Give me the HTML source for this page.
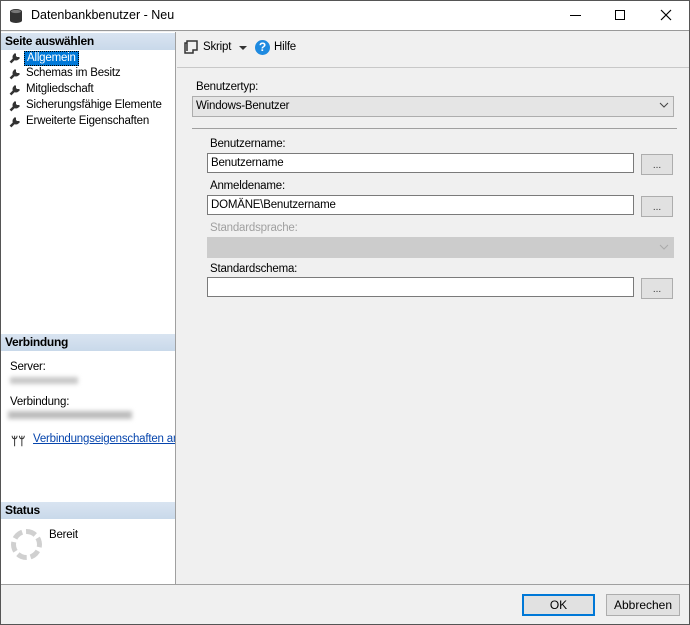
<!DOCTYPE html>
<html><head><meta charset="utf-8"><style>
*{box-sizing:border-box;margin:0;padding:0}
body{width:690px;height:625px;overflow:hidden;font-family:"Liberation Sans",sans-serif;font-size:12px;color:#000;background:#f0f0f0;position:relative}
.a{position:absolute;white-space:nowrap}
.hdr{position:absolute;left:1px;width:174px;height:17px;background:linear-gradient(#d9e4f1,#c9d9ea);font-weight:bold;font-size:12px;padding:1px 0 0 4px;letter-spacing:-0.3px}
.inp{position:absolute;background:#fff;border:1px solid #7a7a7a;height:20px;padding:3px 3px;font-size:11.5px;letter-spacing:-0.2px;white-space:nowrap}
.btn{position:absolute;background:#e1e1e1;border:1px solid #adadad;width:32px;height:21px;font-size:10px;text-align:center;line-height:21px;color:#333}
.lbl{position:absolute;font-size:11.5px;white-space:nowrap;letter-spacing:-0.2px}
.wr{position:absolute;left:9px;width:12px;height:12px}
</style></head><body>
<div class="a" style="left:0;top:0;width:690px;height:625px;border:1px solid #555"></div>
<div class="a" style="left:1px;top:1px;width:688px;height:30px;background:#fff;border-bottom:1px solid #999"></div>
<svg class="a" style="left:9px;top:8px" width="14" height="16" viewBox="0 0 14 16"><ellipse cx="7" cy="3.5" rx="6" ry="2.5" fill="#333"/><rect x="1" y="3.5" width="12" height="9" fill="#333"/><ellipse cx="7" cy="12.5" rx="6" ry="2.5" fill="#333"/><ellipse cx="7" cy="3.5" rx="5" ry="1.6" fill="#777"/></svg>
<div class="a" style="left:31px;top:8px;font-size:12.5px">Datenbankbenutzer - Neu</div>
<div class="a" style="left:570px;top:15px;width:11px;height:1px;background:#000"></div>
<div class="a" style="left:615px;top:10px;width:10px;height:10px;border:1px solid #000"></div>
<svg class="a" style="left:660px;top:9px" width="12" height="12"><path d="M1 1L11 11M11 1L1 11" stroke="#000" stroke-width="1.2"/></svg>

<div class="a" style="left:1px;top:32px;width:175px;height:552px;background:#fff;border-right:1px solid #a0a0a0"></div>
<div class="hdr" style="top:33px">Seite auswählen</div>
<svg class="wr" style="top:52px" viewBox="0 0 12 12"><path d="M1.5 10.5L6 6" stroke="#333" stroke-width="2.5"/><path d="M4.5 2.5a3.5 3.5 0 0 0 5 5l1.5-1.5-1-1-2 0-1-1 0-2-1-1z" fill="#333"/></svg>
<div class="a" style="left:24px;top:51px;height:15px;background:#0078d7;color:#fff;padding:0 2px;border:1px dotted #000;font-size:11.5px;line-height:13px;letter-spacing:-0.2px">Allgemein</div>
<svg class="wr" style="top:68px" viewBox="0 0 12 12"><path d="M1.5 10.5L6 6" stroke="#333" stroke-width="2.5"/><path d="M4.5 2.5a3.5 3.5 0 0 0 5 5l1.5-1.5-1-1-2 0-1-1 0-2-1-1z" fill="#333"/></svg>
<div class="lbl" style="left:26px;top:67px">Schemas im Besitz</div>
<svg class="wr" style="top:84px" viewBox="0 0 12 12"><path d="M1.5 10.5L6 6" stroke="#333" stroke-width="2.5"/><path d="M4.5 2.5a3.5 3.5 0 0 0 5 5l1.5-1.5-1-1-2 0-1-1 0-2-1-1z" fill="#333"/></svg>
<div class="lbl" style="left:26px;top:83px">Mitgliedschaft</div>
<svg class="wr" style="top:100px" viewBox="0 0 12 12"><path d="M1.5 10.5L6 6" stroke="#333" stroke-width="2.5"/><path d="M4.5 2.5a3.5 3.5 0 0 0 5 5l1.5-1.5-1-1-2 0-1-1 0-2-1-1z" fill="#333"/></svg>
<div class="lbl" style="left:26px;top:99px">Sicherungsfähige Elemente</div>
<svg class="wr" style="top:116px" viewBox="0 0 12 12"><path d="M1.5 10.5L6 6" stroke="#333" stroke-width="2.5"/><path d="M4.5 2.5a3.5 3.5 0 0 0 5 5l1.5-1.5-1-1-2 0-1-1 0-2-1-1z" fill="#333"/></svg>
<div class="lbl" style="left:26px;top:115px">Erweiterte Eigenschaften</div>

<div class="hdr" style="top:334px">Verbindung</div>
<div class="lbl" style="left:10px;top:361px">Server:</div>
<div class="a" style="left:10px;top:377px;width:68px;height:7px;background:#c8c8c8;filter:blur(2px)"></div>
<div class="lbl" style="left:10px;top:396px">Verbindung:</div>
<div class="a" style="left:8px;top:411px;width:124px;height:8px;background:#bdbdbd;filter:blur(2px)"></div>
<div class="a" style="left:11px;top:434px;font-size:12px;font-weight:bold;color:#333">ᛘᛘ</div>
<div class="lbl" style="left:33px;top:433px;color:#0645ad;text-decoration:underline;width:142px;overflow:hidden">Verbindungseigenschaften anzeigen</div>

<div class="hdr" style="top:502px">Status</div>
<div class="a" style="left:11px;top:529px;width:31px;height:31px;border-radius:50%;border:5px dashed #d0d0d0"></div>
<div class="lbl" style="left:49px;top:529px">Bereit</div>

<svg class="a" style="left:184px;top:40px" width="14" height="14"><path d="M3 1h10v9H9v3H1V3h2zM3 3v8" stroke="#333" stroke-width="1.5" fill="none"/></svg>
<div class="lbl" style="left:203px;top:41px">Skript</div>
<div class="a" style="left:239px;top:46px;border:4px solid transparent;border-top:4px solid #333"></div>
<div class="a" style="left:255px;top:40px;width:15px;height:15px;border-radius:50%;background:#1e8ae0;color:#fff;font-weight:bold;font-size:12px;text-align:center;line-height:15px">?</div>
<div class="lbl" style="left:274px;top:41px">Hilfe</div>
<div class="a" style="left:177px;top:67px;width:512px;height:1px;background:#c8c8c8"></div>

<div class="lbl" style="left:196px;top:81px">Benutzertyp:</div>
<div class="a" style="left:192px;top:96px;width:482px;height:21px;background:#e5e5e5;border:1px solid #adadad;padding:3px 3px;font-size:11.5px;letter-spacing:-0.2px">Windows-Benutzer</div>
<svg class="a" style="left:659px;top:102px" width="10" height="7"><path d="M1 1l4 4 4-4" stroke="#444" fill="none"/></svg>
<div class="a" style="left:192px;top:128px;width:485px;height:1px;background:#a0a0a0"></div>

<div class="lbl" style="left:210px;top:138px">Benutzername:</div>
<div class="inp" style="left:207px;top:153px;width:427px">Benutzername</div>
<div class="btn" style="left:641px;top:154px">...</div>
<div class="lbl" style="left:210px;top:180px">Anmeldename:</div>
<div class="inp" style="left:207px;top:195px;width:427px">DOMÄNE\Benutzername</div>
<div class="btn" style="left:641px;top:196px">...</div>
<div class="lbl" style="left:210px;top:222px;color:#a0a0a0">Standardsprache:</div>
<div class="a" style="left:207px;top:237px;width:467px;height:21px;background:#ccc;border:1px solid #ccc"></div>
<svg class="a" style="left:659px;top:244px" width="10" height="7"><path d="M1 1l4 4 4-4" stroke="#aaa" fill="none"/></svg>
<div class="lbl" style="left:210px;top:263px">Standardschema:</div>
<div class="inp" style="left:207px;top:277px;width:427px"></div>
<div class="btn" style="left:641px;top:278px">...</div>

<div class="a" style="left:1px;top:584px;width:688px;height:1px;background:#a0a0a0"></div>
<div class="a" style="left:522px;top:594px;width:73px;height:22px;background:#e1e1e1;border:2px solid #0078d7;text-align:center;line-height:18px">OK</div>
<div class="a" style="left:606px;top:594px;width:74px;height:22px;background:#e1e1e1;border:1px solid #adadad;text-align:center;line-height:20px">Abbrechen</div>
</body></html>
